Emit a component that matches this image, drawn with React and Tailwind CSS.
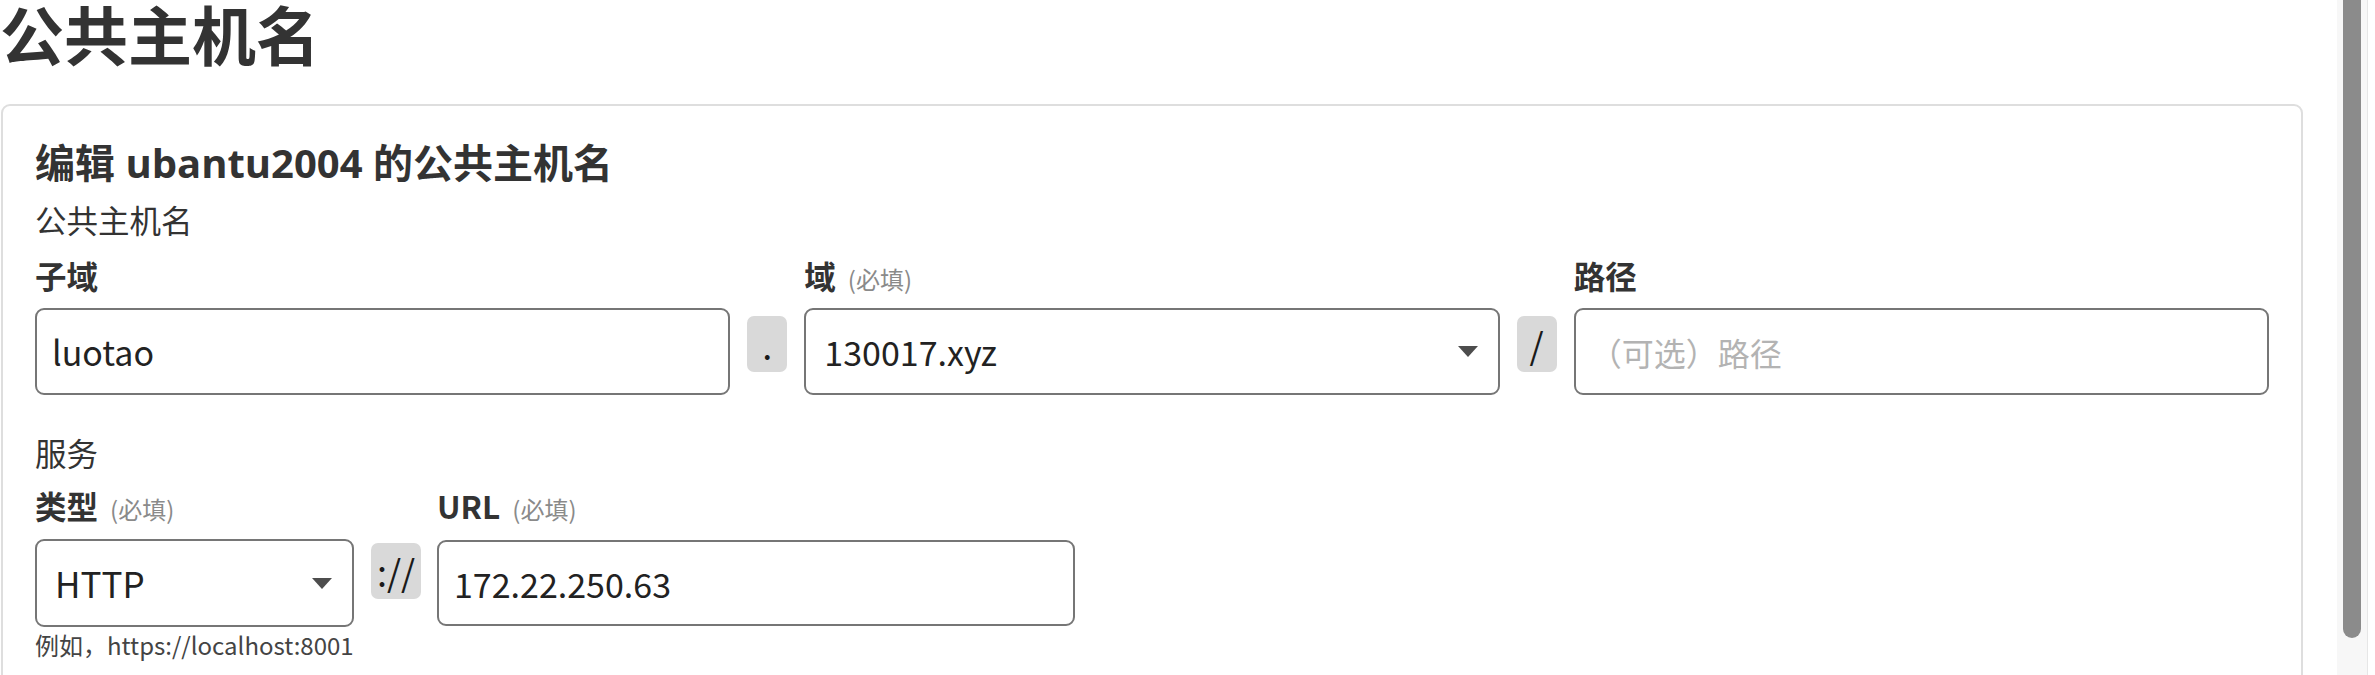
import React from "react";

function Arrow() {
  return (
    <svg width="20" height="11" viewBox="0 0 20 11" className="shrink-0">
      <polygon points="0,0 20,0 10,11" fill="#4d4d4d" />
    </svg>
  );
}

function Sep({ children, w }) {
  return (
    <div
      className={`mt-[8px] h-[56px] ${w} rounded-[7px] bg-[#d9d9d9] flex items-center justify-center text-[36px] leading-none text-[#1a1a1a]`}
    >
      {children}
    </div>
  );
}

function Req() {
  return <span className="ml-[12px] text-[24px] font-normal text-[#8a8a8a]">(必填)</span>;
}

export default function App() {
  return (
    <div className="w-[2375px] h-[675px] overflow-hidden flex bg-white font-['Noto_Sans_CJK_SC',sans-serif] text-[#333]">
      <div className="w-[2337px] shrink-0 pt-[1px]">
        <h1 className="m-0 text-[64px] leading-[62px] font-bold text-[#333]">公共主机名</h1>
        <div className="mt-[41px] ml-px w-[2302px] h-[700px] border-2 border-[#dedede] rounded-[9px] px-[32px] pt-[32px]">
          <h2 className="text-[40px] leading-[49px] font-bold font-['Open_Sans','Noto_Sans_CJK_SC',sans-serif]">
            编辑 ubantu2004 的公共主机名
          </h2>
          <div className="mt-[10px] text-[31.5px] leading-[44px]">公共主机名</div>

          <div className="mt-[12px] grid grid-cols-[1fr_40px_1fr_40px_1fr] gap-x-[17px]">
            <div className="text-[31.5px] leading-[44px] font-bold flex items-baseline">子域</div>
            <div />
            <div className="text-[31.5px] leading-[44px] font-bold flex items-baseline">
              域<Req />
            </div>
            <div />
            <div className="text-[31.5px] leading-[44px] font-bold flex items-baseline">路径</div>

            <div className="mt-[7px] h-[87px] border-2 border-[#767676] rounded-[9px] pl-[15px] flex items-center text-[34px] text-[#222]">
              luotao
            </div>
            <div className="mt-[7px]">
              <Sep w="w-[40px]">.</Sep>
            </div>
            <div className="mt-[7px] h-[87px] border-2 border-[#767676] rounded-[9px] pl-[18px] pr-[20px] flex items-center justify-between text-[34px] text-[#222]">
              <span>130017.xyz</span>
              <Arrow />
            </div>
            <div className="mt-[7px]">
              <Sep w="w-[40px]">/</Sep>
            </div>
            <div className="mt-[7px] h-[87px] border-2 border-[#767676] rounded-[9px] pl-[14px] flex items-center text-[32px] text-[#b3b3b3]">
              （可选）路径
            </div>
          </div>

          <div className="mt-[35px] text-[31.5px] leading-[44px]">服务</div>

          <div className="mt-[9px] flex gap-x-[17px]">
            <div className="w-[319px] flex flex-col">
              <div className="text-[31.5px] leading-[44px] font-bold flex items-baseline">
                类型<Req />
              </div>
              <div className="mt-[8px] h-[88px] border-2 border-[#767676] rounded-[9px] pl-[18px] pr-[20px] flex items-center justify-between text-[35px] text-[#222]">
                <span>HTTP</span>
                <Arrow />
              </div>
              <div className="text-[24px] leading-[36px] text-[#444] whitespace-nowrap">例如，https://localhost:8001</div>
            </div>
            <div className="pt-[52px]">
              <Sep w="w-[50px]">://</Sep>
            </div>
            <div className="w-[638px] ml-[-1px] flex flex-col">
              <div className="text-[31.5px] leading-[44px] font-bold flex items-baseline">
                URL<Req />
              </div>
              <div className="mt-[9px] h-[86px] border-2 border-[#767676] rounded-[9px] pl-[15px] flex items-center text-[34px] text-[#222]">
                172.22.250.63
              </div>
            </div>
          </div>
        </div>
      </div>
      <div className="w-[38px] h-[675px] shrink-0 flex">
        <div className="w-[30px] h-full bg-[#f7f7f7] flex justify-center">
          <div className="w-[18px] h-[638px] bg-[#8b8b8b] rounded-b-[9px]" />
        </div>
        <div className="w-px h-full bg-[#e6e6e6]" />
        <div className="flex-1 h-full bg-white" />
      </div>
    </div>
  );
}
